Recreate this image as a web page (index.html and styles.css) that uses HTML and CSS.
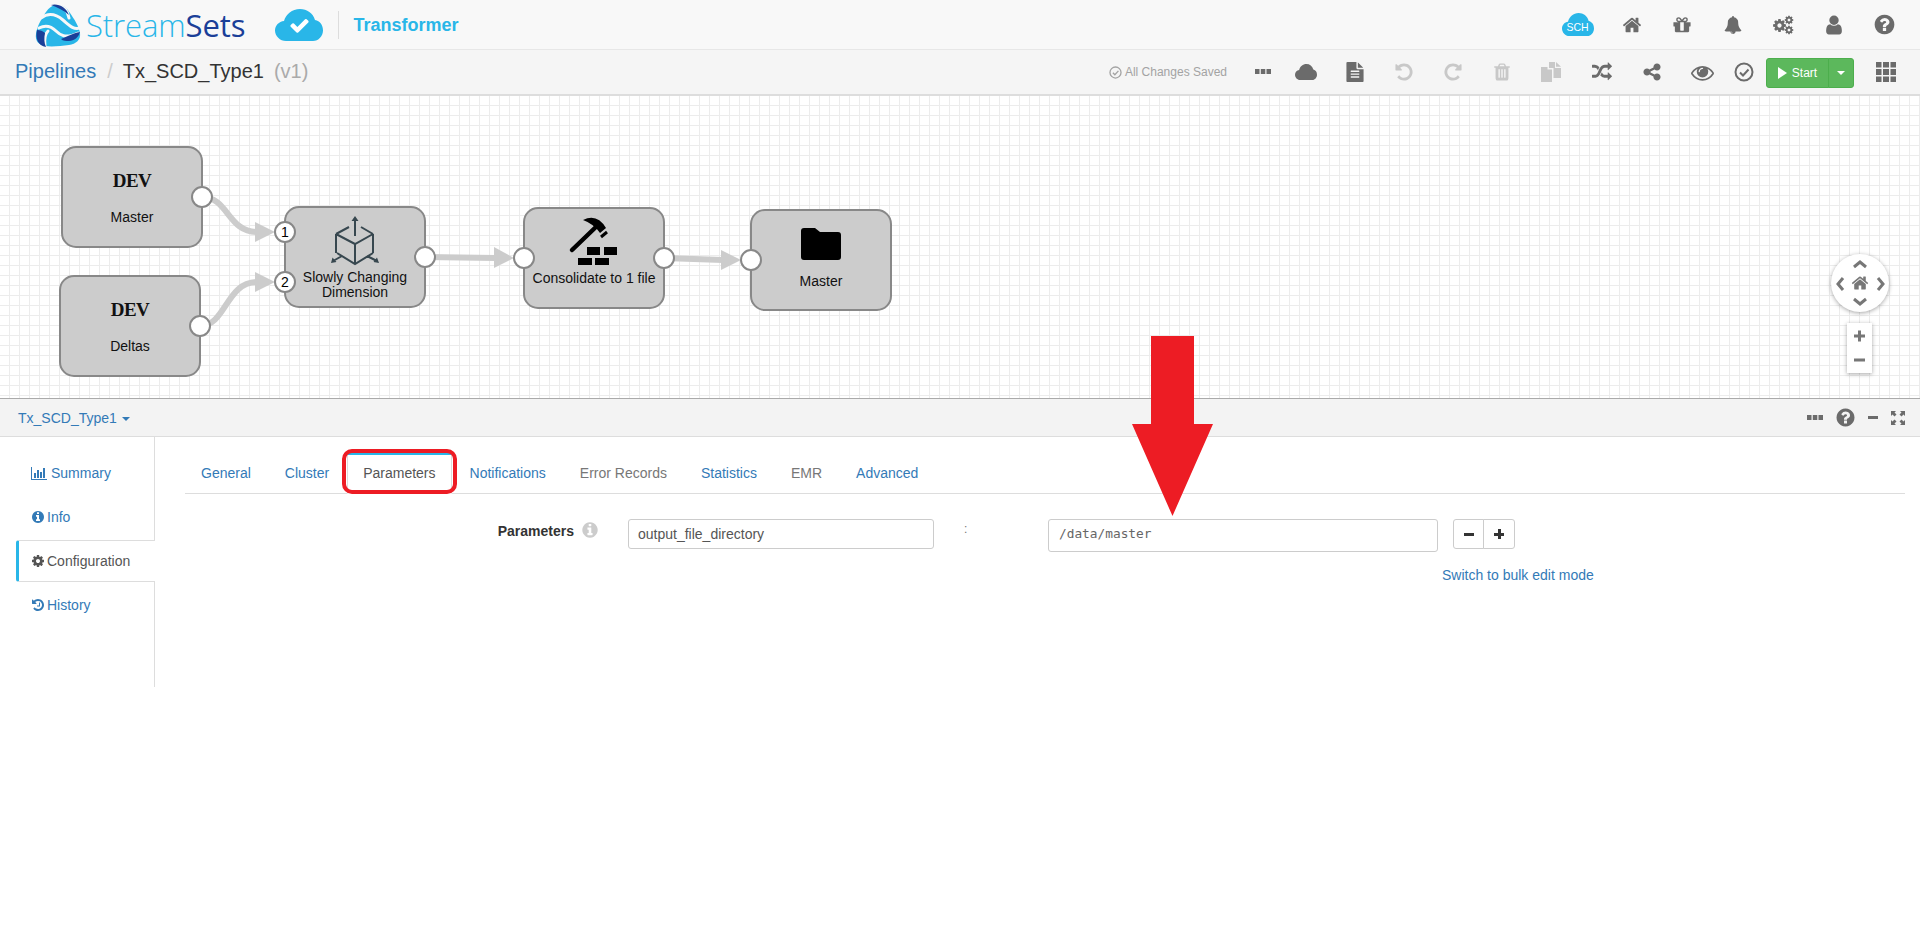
FILE: index.html
```html
<!DOCTYPE html>
<html lang="en">
<head>
<meta charset="utf-8">
<title>Tx_SCD_Type1 - StreamSets Transformer</title>
<link rel="stylesheet" href="styles.css">
</head>
<body>
<svg class="defs" aria-hidden="true">
  <symbol id="i-home" viewBox="0 0 1792 1792"><path d="M1472 992v480q0 26-19 45t-45 19h-384v-384h-256v384h-384q-26 0-45-19t-19-45v-480q0-1 .5-3t.5-3l575-474 575 474q1 2 1 6zm223-69l-62 74q-8 9-21 11h-3q-13 0-21-7l-692-577-692 577q-12 8-24 7-13-2-21-11l-62-74q-8-10-7-23.5t11-21.5l719-599q32-26 76-26t76 26l244 204v-195q0-14 9-23t23-9h192q14 0 23 9t9 23v408l219 182q10 8 11 21.5t-7 23.5z"/></symbol>
  <symbol id="i-gift" viewBox="0 0 1792 1792"><path d="M1056 1356v-716h-320v716q0 25 18 38.5t46 13.5h192q28 0 46-13.5t18-38.5zm-456-844h195l-126-161q-26-31-69-31-40 0-68 28t-28 68 28 68 68 28zm688-96q0-40-28-68t-68-28q-43 0-69 31l-125 161h194q40 0 68-28t28-68zm376 256v320q0 14-9 23t-23 9h-96v416q0 40-28 68t-68 28h-1088q-40 0-68-28t-28-68v-416h-96q-14 0-23-9t-9-23v-320q0-14 9-23t23-9h440q-93 0-158.5-65.5t-65.5-158.5 65.5-158.5 158.5-65.5q107 0 168 77l128 165 128-165q61-77 168-77 93 0 158.5 65.5t65.5 158.5-65.5 158.5-158.5 65.5h440q14 0 23 9t9 23z"/></symbol>
  <symbol id="i-bell" viewBox="0 0 1792 1792"><path d="M912 1696q0-16-16-16-59 0-101.5-42.5t-42.5-101.5q0-16-16-16t-16 16q0 73 51.5 124.5t124.5 51.5q16 0 16-16zm816-288q0 52-38 90t-90 38h-448q0 106-75 181t-181 75-181-75-75-181h-448q-52 0-90-38t-38-90q50-42 91-88t85-119.5 74.5-158.5 50-206 19.5-260q0-152 117-282.5t307-158.5q-8-19-8-39 0-40 28-68t68-28 68 28 28 68q0 20-8 39 190 28 307 158.5t117 282.5q0 139 19.5 260t50 206 74.5 158.5 85 119.5 91 88z"/></symbol>
  <symbol id="i-cog" viewBox="0 0 1792 1792"><path d="M1152 896q0-106-75-181t-181-75-181 75-75 181 75 181 181 75 181-75 75-181zm512-109v222q0 12-8 23t-20 13l-185 28q-19 54-39 91 35 50 107 138 10 12 10 25t-9 23q-27 37-99 108t-94 71q-12 0-26-9l-138-108q-44 23-91 38-16 136-29 186-7 28-36 28h-222q-14 0-24.5-8.5t-11.5-21.5l-28-184q-49-16-90-37l-141 107q-10 9-25 9-14 0-25-11-126-114-165-168-7-10-7-23 0-12 8-23 15-21 51-66.5t54-70.5q-27-50-41-99l-183-27q-13-2-21-12.5t-8-23.5v-222q0-12 8-23t19-13l186-28q14-46 39-92-40-57-107-138-10-12-10-24 0-10 9-23 26-36 98.5-107.5t94.5-71.5q13 0 26 10l138 107q44-23 91-38 16-136 29-186 7-28 36-28h222q14 0 24.5 8.5t11.5 21.5l28 184q49 16 90 37l142-107q9-9 24-9 13 0 25 10 129 119 165 170 7 8 7 22 0 12-8 23-15 21-51 66.5t-54 70.5q26 50 41 98l183 28q13 2 21 12.5t8 23.5z"/></symbol>
  <symbol id="i-user" viewBox="0 0 1792 1792"><path d="M1536 1399q0 109-62.5 187t-150.5 78h-854q-88 0-150.5-78t-62.5-187q0-85 8.5-160.5t31.5-152 58.5-131 94-89 134.5-34.5q131 128 313 128t313-128q76 0 134.5 34.5t94 89 58.5 131 31.5 152 8.5 160.5zm-256-887q0 159-112.5 271.5t-271.5 112.5-271.5-112.5-112.5-271.5 112.5-271.5 271.5-112.5 271.5 112.5 112.5 271.5z"/></symbol>
  <symbol id="i-help" viewBox="0 0 1792 1792"><path d="M1024 1376v-192q0-14-9-23t-23-9h-192q-14 0-23 9t-9 23v192q0 14 9 23t23 9h192q14 0 23-9t9-23zm256-672q0-88-55.5-163t-138.5-116-170-41q-243 0-371 213-15 24 8 42l132 100q7 6 19 6 16 0 25-12 53-68 86-92 34-24 86-24 48 0 85.5 26t37.5 59q0 38-20 61t-68 45q-63 28-115.5 86.5t-52.5 125.5v36q0 14 9 23t23 9h192q14 0 23-9t9-23q0-19 21.5-49.5t54.5-49.5q32-18 49-28.5t46-35 44.5-48 28-60.5 12.5-81zm384 192q0 209-103 385.5t-279.5 279.5-385.5 103-385.5-103-279.5-279.5-103-385.5 103-385.5 279.5-279.5 385.5-103 385.5 103 279.5 279.5 103 385.5z"/></symbol>
  <symbol id="i-info" viewBox="0 0 1792 1792"><path d="M1152 1376v-160q0-14-9-23t-23-9h-96v-512q0-14-9-23t-23-9h-320q-14 0-23 9t-9 23v160q0 14 9 23t23 9h96v320h-96q-14 0-23 9t-9 23v160q0 14 9 23t23 9h448q14 0 23-9t9-23zm-128-896v-160q0-14-9-23t-23-9h-192q-14 0-23 9t-9 23v160q0 14 9 23t23 9h192q14 0 23-9t9-23zm640 416q0 209-103 385.5t-279.5 279.5-385.5 103-385.5-103-279.5-279.5-103-385.5 103-385.5 279.5-279.5 385.5-103 385.5 103 279.5 279.5 103 385.5z"/></symbol>
  <symbol id="i-cloud" viewBox="0 0 48 32" preserveAspectRatio="none"><path d="M11 32C5 32 0 27 0 21.500 0 16.500 4 12.500 9 12 11 5 17 0 25 0c7 0 13 4 15 11 5 1 8 5 8 10.500C48 27 43.500 32 38 32z"/></symbol>
  <symbol id="i-file" viewBox="0 0 1792 1792"><path d="M1596 476q14 14 28 36h-472v-472q22 14 36 28zm-476 164h544v1056q0 40-28 68t-68 28h-1344q-40 0-68-28t-28-68v-1600q0-40 28-68t68-28h800v544q0 40 28 68t68 28zm160 736v-64q0-14-9-23t-23-9h-704q-14 0-23 9t-9 23v64q0 14 9 23t23 9h704q14 0 23-9t9-23zm0-256v-64q0-14-9-23t-23-9h-704q-14 0-23 9t-9 23v64q0 14 9 23t23 9h704q14 0 23-9t9-23zm0-256v-64q0-14-9-23t-23-9h-704q-14 0-23 9t-9 23v64q0 14 9 23t23 9h704q14 0 23-9t9-23z"/></symbol>
  <symbol id="i-undo" viewBox="0 0 1792 1792"><path d="M1664 896q0 156-61 298t-164 245-245 164-298 61q-172 0-327-72.5t-264-204.5q-7-10-6.5-22.5t8.5-20.5l137-138q10-9 25-9 16 2 23 12 73 95 179 147t225 52q104 0 198.5-40.5t163.5-109.5 109.5-163.5 40.5-198.5-40.5-198.5-109.5-163.5-163.5-109.5-198.5-40.5q-98 0-188 35.5t-160 101.5l137 138q31 30 14 69-17 40-59 40h-448q-26 0-45-19t-19-45v-448q0-42 40-59 39-17 69 14l130 129q107-101 244.5-156.5t284.5-55.5q156 0 298 61t245 164 164 245 61 298z"/></symbol>
  <symbol id="i-redo" viewBox="0 0 1792 1792"><path transform="matrix(-1 0 0 1 1792 0)" d="M1664 896q0 156-61 298t-164 245-245 164-298 61q-172 0-327-72.5t-264-204.5q-7-10-6.5-22.5t8.5-20.5l137-138q10-9 25-9 16 2 23 12 73 95 179 147t225 52q104 0 198.5-40.5t163.5-109.5 109.5-163.5 40.5-198.5-40.5-198.5-109.5-163.5-163.5-109.5-198.5-40.5q-98 0-188 35.5t-160 101.5l137 138q31 30 14 69-17 40-59 40h-448q-26 0-45-19t-19-45v-448q0-42 40-59 39-17 69 14l130 129q107-101 244.5-156.5t284.5-55.5q156 0 298 61t245 164 164 245 61 298z"/></symbol>
  <symbol id="i-history" viewBox="0 0 1792 1792"><path d="M1664 896q0 156-61 298t-164 245-245 164-298 61q-172 0-327-72.5t-264-204.5q-7-10-6.5-22.5t8.5-20.5l137-138q10-9 25-9 16 2 23 12 73 95 179 147t225 52q104 0 198.5-40.5t163.5-109.5 109.5-163.5 40.5-198.5-40.5-198.5-109.5-163.5-163.5-109.5-198.5-40.5q-98 0-188 35.5t-160 101.5l137 138q31 30 14 69-17 40-59 40h-448q-26 0-45-19t-19-45v-448q0-42 40-59 39-17 69 14l130 129q107-101 244.5-156.5t284.5-55.5q156 0 298 61t245 164 164 245 61 298zm-512-288v448q0 14-9 23t-23 9h-320q-14 0-23-9t-9-23v-64q0-14 9-23t23-9h224v-352q0-14 9-23t23-9h64q14 0 23 9t9 23z"/></symbol>
  <symbol id="i-trash" viewBox="0 0 1792 1792"><path d="M704 1376v-704q0-14-9-23t-23-9h-64q-14 0-23 9t-9 23v704q0 14 9 23t23 9h64q14 0 23-9t9-23zm256 0v-704q0-14-9-23t-23-9h-64q-14 0-23 9t-9 23v704q0 14 9 23t23 9h64q14 0 23-9t9-23zm256 0v-704q0-14-9-23t-23-9h-64q-14 0-23 9t-9 23v704q0 14 9 23t23 9h64q14 0 23-9t9-23zm-544-992h448l-48-117q-7-9-17-11h-317q-10 2-17 11zm928 32v64q0 14-9 23t-23 9h-96v948q0 83-47 143.5t-113 60.5h-832q-66 0-113-58.5t-47-141.5v-952h-96q-14 0-23-9t-9-23v-64q0-14 9-23t23-9h309l70-167q15-37 54-63t79-26h320q40 0 79 26t54 63l70 167h309q14 0 23 9t9 23z"/></symbol>
  <symbol id="i-copy" viewBox="0 0 20 20"><path d="M0 5h6.500v2.500H11V20H0zM8 0h6v6h6v10h-7.500V6H8zM15 0l5 4.800h-5z"/></symbol>
  <symbol id="i-random" viewBox="0 0 1792 1792"><path d="M666 481q-60 92-137 273-22-45-37-72.5t-40.5-63.5-51-56.5-63-35-81.5-14.5h-224q-14 0-23-9t-9-23v-192q0-14 9-23t23-9h224q250 0 410 225zm1126 799q0 14-9 23l-320 320q-9 9-23 9-13 0-22.5-9.5t-9.5-22.5v-192q-32 0-85 .5t-81 1-73-1-71-5-64-10.5-63-18.5-58-28.5-59-40-55-53.5-56-69.5q59-93 136-273 22 45 37 72.5t40.5 63.5 51 56.5 63 35 81.5 14.5h256v-192q0-14 9-23t23-9q12 0 24 10l319 319q9 9 9 23zm0-896q0 14-9 23l-320 320q-9 9-23 9-13 0-22.5-9.5t-9.5-22.5v-192h-256q-48 0-87 15t-69 45-51 61.5-45 77.5q-32 62-78 171-29 66-49.5 111t-54 105-64 100-74 83-90 68.5-106.5 42-128 16.5h-224q-14 0-23-9t-9-23v-192q0-14 9-23t23-9h224q48 0 87-15t69-45 51-61.5 45-77.5q32-62 78-171 29-66 49.5-111t54-105 64-100 74-83 90-68.5 106.5-42 128-16.5h256v-192q0-14 9-23t23-9q12 0 24 10l319 319q9 9 9 23z"/></symbol>
  <symbol id="i-share" viewBox="0 0 1792 1792"><path d="M1344 1024q133 0 226.500 93.500t93.500 226.500-93.500 226.500-226.500 93.500-226.500-93.500-93.500-226.500q0-12 2-34l-360-180q-92 86-218 86-133 0-226.500-93.500t-93.500-226.500 93.500-226.500 226.500-93.500q126 0 218 86l360-180q-2-22-2-34 0-133 93.500-226.500t226.500-93.500 226.500 93.500 93.500 226.500-93.500 226.500-226.500 93.500q-126 0-218-86l-360 180q2 22 2 34t-2 34l360 180q92-86 218-86z"/></symbol>
  <symbol id="i-eye" viewBox="0 0 1792 1792"><path d="M1664 960q-152-236-381-353 61 104 61 225 0 185-131.500 316.500t-316.500 131.500-316.500-131.500-131.500-316.500q0-121 61-225-229 117-381 353 133 205 333.500 326.500t434.500 121.500 434.500-121.500 333.500-326.500zm-720-384q0-20-14-34t-34-14q-125 0-214.500 89.500t-89.500 214.500q0 20 14 34t34 14 34-14 14-34q0-86 61-147t147-61q20 0 34-14t14-34zm848 384q0 34-20 69-140 230-376.500 368.500t-499.500 138.500-499.500-139-376.500-368q-20-35-20-69t20-69q140-229 376.500-368t499.500-139 499.500 139 376.500 368q20 35 20 69z"/></symbol>
  <symbol id="i-check-o" viewBox="0 0 20 20"><path class="stroke-2" d="M10 1.500a8.500 8.500 0 1 0 0 17a8.500 8.500 0 1 0 0-17z"/><path class="stroke-2" d="M6 10.500l3 3 5.500-6"/></symbol>
  <symbol id="i-check" viewBox="0 0 1792 1792"><path d="M1671 566q0 40-28 68l-724 724-136 136q-28 28-68 28t-68-28l-136-136-362-362q-28-28-28-68t28-68l136-136q28-28 68-28t68 28l294 295 656-657q28-28 68-28t68 28l136 136q28 28 28 68z"/></symbol>
  <symbol id="i-bars" viewBox="0 0 16 14"><path d="M0 1h1v12h15v1H0zM3 7h2v5H3zM6 4h2v8H6zM9 6h2v6H9zM12 2h2v10h-2z"/></symbol>
  <symbol id="i-dots" viewBox="0 0 16 6"><path d="M0 0h4.500v5H0zM5.800 0h4.500v5H5.800zM11.500 0H16v5h-4.500z"/></symbol>
  <symbol id="i-grid" viewBox="0 0 20 20"><path d="M0 0h5.500v5.500H0zM7 0h6v5.500H7zM14.500 0H20v5.500h-5.500zM0 7h5.500v6H0zM7 7h6v6H7zM14.500 7H20v6h-5.500zM0 14.500h5.500V20H0zM7 14.500h6V20H7zM14.500 14.500H20V20h-5.500z"/></symbol>
  <symbol id="i-expand" viewBox="0 0 14 14"><path d="M0 0h5L3.500 1.500 5.500 3.500 3.500 5.500 1.500 3.500 0 5zM14 0v5L12.500 3.500 10.500 5.500 8.500 3.500 10.500 1.500 9 0zM0 14V9l1.500 1.500 2-2 2 2-2 2L5 14zM14 14H9l1.500-1.500-2-2 2-2 2 2L14 9z"/></symbol>
</svg>

<header class="topbar">
  <div class="brand">
    <svg class="swirl" viewBox="0 0 46 46" aria-hidden="true">
      <path class="swirl-light" d="M20 3C26 1 31 5 35 11c4 6 9 13 10 20 1 7-4 11-11 12-8 1-17 2-24 1C3 43 0 38 1 32 2 24 7 16 11 10c3-4 5-6 9-7z"/>
      <path class="swirl-cut" d="M6 16C14 10 22 13 28 18s10 10 17 8"/>
      <path class="swirl-cut" d="M4 26C12 22 17 25 21 29s9 8 22 2"/>
      <path class="swirl-cut" d="M19 1c8 2 14 7 15 15"/>
      <path class="swirl-cut" d="M10 44c-1-8 0-12 3-15"/>
      <path class="swirl-dark" d="M16 3c7-2 15 2 18 10-6-5-12-8-18-10z"/>
      <path class="swirl-dark" d="M2 28c3 0 6 1 8 3-1 5-1 10 1 14-8-1-11-9-9-17z"/>
      <path class="swirl-dark" d="M26 37c5-2 12-6 19-7-1 5-6 9-11 9-3 0-6 0-8-2z"/>
    </svg>
    <span class="wordmark"><span class="wm-light">Stream</span><span class="wm-dark">Sets</span></span>
    <svg class="brand-cloud" viewBox="0 0 48 32" aria-hidden="true">
      <use href="#i-cloud" width="48" height="32" class="fill-sky"/>
      <use href="#i-check" x="14" y="6" width="21" height="21" class="fill-white"/>
    </svg>
    <span class="brand-sep"></span>
    <span class="product">Transformer</span>
  </div>
  <nav class="top-icons">
    <span class="top-cell top-sch">
      <svg class="sch" viewBox="0 0 32 23" aria-hidden="true">
        <use href="#i-cloud" width="32" height="23" class="fill-sky"/>
        <text x="15.500" y="17.500" class="sch-text">SCH</text>
      </svg>
    </span>
    <span class="top-cell"><svg class="ic ic-20"><use href="#i-home"/></svg></span>
    <span class="top-cell"><svg class="ic ic-20"><use href="#i-gift"/></svg></span>
    <span class="top-cell"><svg class="ic ic-18"><use href="#i-bell"/></svg></span>
    <span class="top-cell">
      <svg class="gears" viewBox="0 0 22 20" aria-hidden="true">
        <use href="#i-cog" x="0" y="3" width="15" height="15"/>
        <use href="#i-cog" x="12" y="0" width="10" height="10"/>
        <use href="#i-cog" x="12" y="10" width="10" height="10"/>
      </svg>
    </span>
    <span class="top-cell"><svg class="ic ic-22"><use href="#i-user"/></svg></span>
    <span class="top-cell"><svg class="ic ic-23"><use href="#i-help"/></svg></span>
  </nav>
</header>

<div class="subbar">
  <div class="crumbs">
    <a class="crumb-link">Pipelines</a>
    <span class="crumb-sep">/</span>
    <span class="crumb-name">Tx_SCD_Type1</span>
    <span class="crumb-ver">(v1)</span>
  </div>
  <div class="tools">
    <span class="saved"><svg class="saved-ic" viewBox="0 0 20 20"><use href="#i-check-o"/></svg>All Changes Saved</span>
    <span class="tool tool-dots"><svg class="dots"><use href="#i-dots"/></svg></span>
    <span class="tool"><svg class="cloud-ic"><use href="#i-cloud"/></svg></span>
    <span class="tool"><svg class="ic ic-20"><use href="#i-file"/></svg></span>
    <span class="tool is-off"><svg class="ic ic-20"><use href="#i-undo"/></svg></span>
    <span class="tool is-off"><svg class="ic ic-20"><use href="#i-redo"/></svg></span>
    <span class="tool is-off"><svg class="ic ic-20"><use href="#i-trash"/></svg></span>
    <span class="tool tool-50 is-off"><svg class="ic ic-20"><use href="#i-copy"/></svg></span>
    <span class="tool tool-51"><svg class="ic ic-20"><use href="#i-random"/></svg></span>
    <span class="tool tool-50"><svg class="ic ic-20"><use href="#i-share"/></svg></span>
    <span class="tool tool-50"><svg class="ic ic-23"><use href="#i-eye"/></svg></span>
    <span class="tool tool-check"><svg class="ic ic-20"><use href="#i-check-o"/></svg></span>
    <div class="start-group">
      <button class="start-btn"><span class="play"></span>Start</button>
      <button class="start-caret"><span class="caret caret-white"></span></button>
    </div>
    <svg class="ic ic-20 grid-ic"><use href="#i-grid"/></svg>
  </div>
</div>

<section class="canvas">
  <svg class="diagram" viewBox="0 96 1920 302" width="1920" height="302">
    <g class="wires">
      <path d="M202 197C228 197 228 232 257 232"/>
      <path d="M200 326C226 326 226 282 257 282"/>
      <path d="M425 257L496 258"/>
      <path d="M664 258L723 260"/>
    </g>
    <g class="arrowheads">
      <path d="M255 222L275 232L255 242z"/>
      <path d="M255 272L275 282L255 292z"/>
      <path d="M494 247L514 258L494 268z"/>
      <path d="M721 250L741 260L721 270z"/>
    </g>
    <g class="nodes">
      <rect x="62" y="147" width="140" height="100" rx="14"/>
      <rect x="60" y="276" width="140" height="100" rx="14"/>
      <rect x="285" y="207" width="140" height="100" rx="14"/>
      <rect x="524" y="208" width="140" height="100" rx="14"/>
      <rect x="751" y="210" width="140" height="100" rx="14"/>
    </g>
    <g class="ports">
      <circle cx="202" cy="197" r="10"/>
      <circle cx="200" cy="326" r="10"/>
      <circle cx="285" cy="232" r="10"/>
      <circle cx="285" cy="282" r="10"/>
      <circle cx="425" cy="257" r="10"/>
      <circle cx="524" cy="258" r="10"/>
      <circle cx="664" cy="258" r="10"/>
      <circle cx="751" cy="260" r="10"/>
    </g>
    <text x="285" y="237" class="port-num">1</text>
    <text x="285" y="287" class="port-num">2</text>
    <text x="132" y="187" class="dev">DEV</text>
    <text x="132" y="222" class="node-label">Master</text>
    <text x="130" y="316" class="dev">DEV</text>
    <text x="130" y="351" class="node-label">Deltas</text>
    <text x="355" y="282" class="node-label">Slowly Changing</text>
    <text x="355" y="297" class="node-label">Dimension</text>
    <text x="594" y="283" class="node-label">Consolidate to 1 file</text>
    <text x="821" y="286" class="node-label">Master</text>

    <g class="cube">
      <path d="M336 234L349 227M361 227L373 234M355 219V236M336 234L355 244L373 234M355 244V264M336 234V253M373 234V253M337 253L355 264L373 253M342 256L333 261M367 256L377 261"/>
      <path class="cube-head" d="M355 216l3.500 5h-7zM331 263l1.500-5.500 4 4.500zM379 263l-5.500-1 3.500-4.500z"/>
    </g>
    <g class="hammer">
      <path d="M583 220Q597 213 606 228L600 233Q594 224 583 220z"/>
      <path class="hammer-handle" d="M572 250L598 225"/>
      <path class="hammer-tab" d="M601 237L607 232"/>
      <path d="M587 247h13v8h-13zM604 247h13v8h-13zM578 258h14v7h-14zM595 258h14v7h-14z"/>
    </g>
    <path class="folder" d="M804 228h11l5 4h18q3 0 3 3v22q0 3-3 3h-34q-3 0-3-3v-26q0-3 3-3z"/>

    <g class="navigator">
      <circle class="nav-disc" cx="1860" cy="283" r="29"/>
      <path class="nav-chev" d="M1854 267l6-5 6 5M1843 278l-5 6 5 6M1878 278l5 6-5 6M1854 299l6 5 6-5"/>
      <use href="#i-home" x="1851" y="274" width="18" height="18" class="fill-grey"/>
      <rect class="nav-disc" x="1847" y="323" width="25" height="50"/>
      <path class="nav-bar" d="M1854 336h11M1859.500 330.500v11M1854 360h11"/>
    </g>
  </svg>
</section>

<div class="panel-head">
  <a class="panel-title">Tx_SCD_Type1 <span class="caret caret-blue"></span></a>
  <div class="panel-tools">
    <svg class="dots"><use href="#i-dots"/></svg>
    <svg class="ic ic-help-sm"><use href="#i-help"/></svg>
    <span class="minus"></span>
    <svg class="ic expand"><use href="#i-expand"/></svg>
  </div>
</div>

<div class="panel-body">
  <aside class="side">
    <a class="side-item"><svg class="side-bars"><use href="#i-bars"/></svg>Summary</a>
    <a class="side-item"><svg class="side-ic"><use href="#i-info"/></svg>Info</a>
    <a class="side-item is-active"><svg class="side-ic"><use href="#i-cog"/></svg>Configuration</a>
    <a class="side-item"><svg class="side-ic"><use href="#i-history"/></svg>History</a>
  </aside>
  <main class="content">
    <ul class="tabs">
      <li class="tab">General</li>
      <li class="tab">Cluster</li>
      <li class="tab is-active">Parameters</li>
      <li class="tab">Notifications</li>
      <li class="tab is-muted">Error Records</li>
      <li class="tab">Statistics</li>
      <li class="tab is-muted">EMR</li>
      <li class="tab">Advanced</li>
    </ul>
    <div class="param-form">
      <div class="param-label"><strong>Parameters</strong><svg class="help-ic"><use href="#i-info"/></svg></div>
      <div class="field">output_file_directory</div>
      <div class="colon">:</div>
      <div class="field field-code">/data/master</div>
      <div class="btn-pair">
        <button class="pair-btn"><span class="pm-minus"></span></button>
        <button class="pair-btn"><span class="pm-plus"></span></button>
      </div>
      <a class="bulk-link">Switch to bulk edit mode</a>
    </div>
  </main>
</div>

<svg class="red-arrow" viewBox="0 0 81 180" width="81" height="180" aria-hidden="true">
  <path d="M19 0h43v88h19L40.500 180 0 88h19z"/>
</svg>
</body>
</html>
```
FILE: styles.css
```css
* { box-sizing: border-box; }
html, body { margin: 0; padding: 0; }
body {
  position: relative;
  min-height: 951px;
  background: #fff;
  color: #333;
  font: 14px/20px "Liberation Sans", Arial, sans-serif;
}
a { color: #337ab7; text-decoration: none; }
svg { display: block; fill: currentColor; flex: none; }
.defs { display: none; }
.fill-sky { fill: #29b6e8; }
.fill-white { fill: #fff; }
.fill-grey { fill: #777; }
.stroke-2 { fill: none; stroke: currentColor; stroke-width: 2; }

/* top bar */
.topbar {
  display: flex;
  align-items: center;
  justify-content: space-between;
  height: 50px;
  padding: 0 10.75px 0 35px;
  background: #f8f8f8;
  border-bottom: 1px solid #e7e7e7;
}
.brand { display: flex; align-items: center; }
.swirl { width: 46px; height: 46px; }
.swirl-light { fill: #29b6e8; }
.swirl-dark { fill: #1b3f98; }
.swirl-cut { fill: none; stroke: #f8f8f8; stroke-width: 3; stroke-linecap: round; }
.wordmark {
  margin-left: 5px;
  font: 300 31px/40px "Open Sans", sans-serif;
  letter-spacing: -0.1px;
}
.wm-light { color: #29b6e8; }
.wm-dark { color: #1b3f98; font-weight: 400; }
.brand-cloud { width: 48px; height: 32px; margin-left: 30px; }
.brand-sep { width: 1px; height: 28px; margin-left: 15px; background: #ddd; }
.product { margin-left: 14px; color: #29b6e8; font-size: 18px; font-weight: 700; }
.top-icons { display: flex; align-items: center; color: #6b6b6b; }
.top-cell { display: flex; justify-content: center; align-items: center; width: 50.5px; }
.top-sch { margin-right: 3px; }
.sch { width: 32px; height: 23px; }
.sch-text { fill: #fff; font: 10.500px "Liberation Sans", sans-serif; text-anchor: middle; }
.gears { width: 22px; height: 20px; }
.ic { display: block; }
.ic-18 { width: 18px; height: 18px; }
.ic-20 { width: 20px; height: 20px; }
.ic-22 { width: 22px; height: 22px; }
.ic-23 { width: 23px; height: 23px; }

/* breadcrumb bar */
.subbar {
  display: flex;
  align-items: center;
  justify-content: space-between;
  height: 46px;
  padding: 0 24px 0 15px;
  background: #f5f5f5;
  border-bottom: 2px solid #ddd;
}
.crumbs { display: flex; align-items: center; margin-bottom: 2px; font-size: 20px; line-height: 28px; }
.crumb-sep { margin-left: 11px; color: #ccc; }
.crumb-name { margin-left: 10px; color: #333; }
.crumb-ver { margin-left: 10px; color: #aaa; }
.tools { display: flex; align-items: center; color: #6b6b6b; }
.saved {
  display: flex;
  align-items: center;
  gap: 3px;
  margin-right: 18px;
  color: #a3a3a3;
  font-size: 12px;
}
.saved-ic { width: 13px; height: 13px; }
.tool { display: flex; justify-content: center; align-items: center; width: 49px; }
.tool-dots { width: 36px; }
.tool-51 { width: 51px; }
.tool-50 { width: 50px; }
.tool-check { width: 34px; margin-right: 5px; }
.is-off { color: #c8c8c8; }
.dots { width: 16px; height: 6px; }
.cloud-ic { width: 22px; height: 16px; }
.start-group { display: flex; height: 30px; margin: 2px 22px 0 0; }
.start-btn, .start-caret {
  display: flex;
  align-items: center;
  justify-content: center;
  padding: 0;
  border: 1px solid #4cae4c;
  background: #5cb85c;
  color: #fff;
  font: 12px "Liberation Sans", sans-serif;
}
.start-btn { width: 63px; border-radius: 3px 0 0 3px; }
.start-caret { width: 26px; margin-left: -1px; border-radius: 0 3px 3px 0; }
.play {
  width: 0;
  height: 0;
  margin-right: 5px;
  border-left: 9px solid #fff;
  border-top: 6px solid transparent;
  border-bottom: 6px solid transparent;
}
.caret {
  display: inline-block;
  width: 0;
  height: 0;
  border-top: 4px solid;
  border-left: 4px solid transparent;
  border-right: 4px solid transparent;
  vertical-align: middle;
}
.caret-white { color: #fff; }
.caret-blue { color: #337ab7; margin-left: 1px; }

/* canvas */
.canvas {
  height: 303px;
  border-bottom: 1px solid #aaa;
  background-color: #fff;
  background-image:
    linear-gradient(to right, #ececec 1px, transparent 1px),
    linear-gradient(to bottom, #ececec 1px, transparent 1px);
  background-size: 10px 10px;
  background-position: 9px 9px;
}
.diagram { display: block; }
.wires path { fill: none; stroke: #ccc; stroke-width: 6; }
.arrowheads path { fill: #ccc; }
.nodes rect { fill: #ccc; stroke: #888; stroke-width: 2; }
.ports circle { fill: #fff; stroke: #888; stroke-width: 2; }
.port-num { fill: #000; font: 14px "Liberation Sans", sans-serif; text-anchor: middle; }
.node-label { fill: #111; font: 14px "Liberation Sans", sans-serif; text-anchor: middle; }
.dev {
  fill: #111;
  font: 700 19px "Liberation Serif", "Courier New", serif;
  letter-spacing: -0.5px;
  text-anchor: middle;
}
.cube path { fill: none; stroke: #37474f; stroke-width: 2; }
.cube .cube-head { fill: #37474f; stroke: none; }
.hammer { fill: #000; }
.hammer-handle { fill: none; stroke: #000; stroke-width: 4.5; stroke-linecap: round; }
.hammer-tab { fill: none; stroke: #000; stroke-width: 3; }
.folder { fill: #000; }
.nav-disc { fill: #fff; filter: drop-shadow(0 1px 2px rgba(0, 0, 0, .35)); }
.nav-chev { fill: none; stroke: #777; stroke-width: 3; }
.nav-bar { fill: none; stroke: #777; stroke-width: 3; }

/* panel header */
.panel-head {
  display: flex;
  align-items: center;
  justify-content: space-between;
  height: 38px;
  padding: 0 15px 0 18px;
  background: #f3f3f3;
  border-bottom: 1px solid #ddd;
}
.panel-tools { display: flex; align-items: center; gap: 13px; color: #6b6b6b; }
.ic-help-sm { width: 21px; height: 21px; margin: 0 -1px; }
.minus { width: 10px; height: 3px; background: #6b6b6b; }
.expand { width: 14px; height: 14px; }

/* panel body */
.panel-body { display: flex; height: 250px; }
.side {
  width: 155px;
  flex: none;
  padding-top: 14px;
  border-right: 1px solid #ddd;
}
.side-item {
  display: flex;
  align-items: center;
  height: 44px;
  padding-left: 31px;
}
.side-bars { width: 16px; height: 14px; margin-right: 4px; }
.side-ic { width: 14px; height: 14px; margin-right: 2px; }
.side-item.is-active {
  position: relative;
  width: 139px;
  height: 42px;
  margin: 1px -1px 1px 16px;
  padding-left: 12px;
  color: #555;
  background: #fff;
  border-left: 3px solid #29b6e8;
  border-top: 1px solid #ddd;
  border-bottom: 1px solid #ddd;
  border-radius: 3px 0 0 3px;
}
.content { flex: 1; min-width: 0; padding: 16px 15px 0 30px; }
.tabs {
  display: flex;
  height: 41px;
  margin: 0;
  padding: 0;
  list-style: none;
  border-bottom: 1px solid #ddd;
}
.tab {
  height: 41px;
  margin-right: 2px;
  padding: 9px 15px 0;
  border: 1px solid transparent;
  color: #337ab7;
}
.tab.is-muted { color: #777; }
.tab.is-active {
  position: relative;
  color: #555;
  background: #fff;
  border-color: #29b6e8 #ddd #fff;
  border-top-width: 2px;
  padding-top: 8px;
}
.tab.is-active::after {
  content: "";
  position: absolute;
  left: -6px;
  right: -6px;
  top: -6px;
  bottom: -1px;
  border: 4px solid #ed1c24;
  border-radius: 10px;
}
.param-form {
  display: grid;
  grid-template-columns: 443px 306px 114px 390px auto;
  row-gap: 13px;
  align-items: start;
  margin-top: 25px;
}
.param-label {
  display: flex;
  justify-content: flex-end;
  align-items: center;
  gap: 7px;
  height: 24px;
  padding-right: 29px;
}
.help-ic { width: 18px; height: 18px; color: #ccc; margin-top: -2px; }
.field {
  height: 30px;
  padding: 4px 9px;
  border: 1px solid #ccc;
  border-radius: 3px;
  color: #555;
  background: #fff;
}
.field-code {
  height: 33px;
  padding: 3px 10px;
  color: #666;
  font: 12.800px/22px "DejaVu Sans Mono", monospace;
}
.colon { padding: 0 0 0 30px; color: #777; font-size: 12px; line-height: 20px; }
.btn-pair { display: flex; height: 30px; margin-left: 15px; width: 62px; }
.pair-btn {
  display: flex;
  align-items: center;
  justify-content: center;
  width: 31px;
  padding: 0;
  border: 1px solid #ccc;
  background: #fff;
}
.pair-btn:first-child { border-radius: 3px 0 0 3px; }
.pair-btn:last-child { width: 32px; margin-left: -1px; border-radius: 0 3px 3px 0; }
.pm-minus, .pm-plus { position: relative; display: block; width: 10px; height: 3px; background: #333; }
.pm-plus::after {
  content: "";
  position: absolute;
  left: 3.500px;
  top: -3.500px;
  width: 3px;
  height: 10px;
  background: #333;
}
.bulk-link {
  grid-column: 5;
  margin-left: 4px;
  white-space: nowrap;
}

/* annotation */
.red-arrow {
  position: absolute;
  left: 1132px;
  top: 336px;
  fill: #ed1c24;
}
```
